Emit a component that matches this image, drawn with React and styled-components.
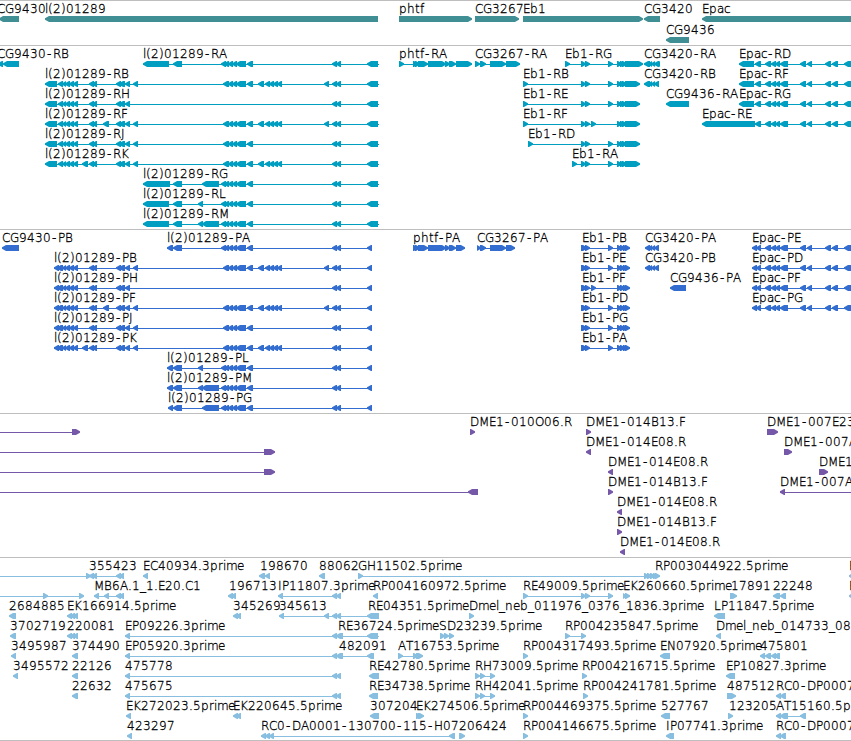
import React from 'react';
import styled, { createGlobalStyle } from 'styled-components';

const GlobalStyle = createGlobalStyle`
  body {
    margin: 0;
    background: #fff;
    overflow: hidden;
  }
`;

// advance widths of the label face at 12px, whole pixels like the old bitmap fonts
const ADVANCE = {
  '(': 5, ')': 5, '-': 7, '.': 4, _: 6,
  A: 8, B: 8, C: 8, D: 9, E: 7, F: 7, G: 9, H: 9, I: 4, J: 5, K: 8, L: 7, M: 10,
  N: 9, O: 9, P: 7, R: 8, S: 8, T: 7,
  a: 7, b: 8, c: 6, e: 7, f: 4, h: 8, i: 3, l: 3, m: 11, n: 8, p: 8, r: 5, t: 5,
};

function glyphPositions(text, start) {
  let pen = start;
  return text.split('').map((ch) => {
    const at = ch === '-' ? pen + 1 : pen;
    pen += ADVANCE[ch] || 8;
    return at;
  }).join(' ');
}

// blunt arrow head, widening to the full six pixels of the body
function arrow([from, to], dir) {
  const tip = dir === 'L' ? from : to;
  const end = dir === 'L' ? to : from;
  const neck = dir === 'L' ? tip + 4 : tip - 4;
  return `M${tip} 17.2 L${neck} 15 H${end} V21 H${neck} L${tip} 18.8 Z`;
}

/* f(label, label x, direction, exons, [line start, line end]) */
const f = (label, x, dir, exons = [], line) => ({ label, x, dir, exons, line });

// exon groups shared by the transcripts
const farEnd = [[332, 337], [336, 341]];
const extra = [[324, 329]];
const wideCluster = [[221, 226], [224, 229], [228, 233], [232, 237], [236, 246], [247, 253]];
const cluster = [[223, 229], [228, 233], [232, 237], [236, 246], [247, 253]];
const tail = [[258, 264], [265, 270], [269, 274], [273, 278], [277, 282]];
const five = [[58, 63], [62, 66], [65, 70], [69, 74], [73, 78]];
const pair = [[89, 94], [92, 97]];
const triple = [[116, 121], [119, 125], [125, 130]];
const after = [[133, 138]];

const eb1Mid = [[581, 586], [585, 590], [608, 613]];
const eb1MidF = [[581, 586], [585, 590], [591, 596]];
const eb1End = [[617, 622], [620, 625], [622, 627], [625, 640]];
const eb1Prot = [[617, 622], [620, 625], [623, 628], [625, 630]];
const cg3420 = [[648, 652], [651, 655], [654, 659]];
const epac = [[765, 771], [771, 776], [775, 780], [780, 788], [800, 806], [807, 812], [825, 831], [832, 838], [844, 856]];

const genes = [
  [
    f('CG9430', -3, 'L', [[-1, 19]]),
    f('l(2)01289', 45, 'L', [[45, 378]]),
    f('phtf', 399, 'R', [[399, 472]]),
    f('CG3267', 475, 'R', [[475, 519]]),
    f('Eb1', 523, 'R', [[523, 643]]),
    f('CG3420', 644, 'L', [[644, 660]]),
    f('Epac', 702, 'L', [[702, 860]]),
  ],
  [f('CG9436', 666, 'L', [[666, 689]])],
];

const lrna = (name, x, exons) => f(`l(2)01289-${name}`, x, 'L', [...exons, ...farEnd, [367, 378]], [x, 379]);
const lprot = (name, x, exons) => f(`l(2)01289-${name}`, x, 'L', [...exons, ...farEnd, [367, 372]], [x, 372]);
const eb1 = (name, x, mid, end) => f(`Eb1-${name}`, x, 'R', [[x, x + 5], ...mid, ...end], [x, end[3][1]]);
const epacRow = (name, x, exons) => f(`Epac-${name}`, x, 'L', [...exons, ...epac], [x, 851]);

const rnaStart = [[45, 57], ...five];
const protStart = [[54, 59], [57, 62], ...five];

const transcripts = [
  [
    f('CG9430-RB', -3, 'L', [[-2, 3], [3, 19]]),
    lrna('RA', 143, [[143, 169], [173, 182], ...wideCluster]),
    f('phtf-RA', 399, 'R', [[399, 404], [413, 418], [415, 420], [418, 428], [428, 446], [445, 450], [449, 456], [456, 472]], [399, 472]),
    f('CG3267-RA', 475, 'R', [[475, 480], [480, 486], [490, 506], [506, 520]], [475, 520]),
    eb1('RG', 565, eb1Mid, [[617, 622], [620, 625], [622, 627], [625, 643]]),
    f('CG3420-RA', 644, 'L', [[644, 650], ...cg3420, [656, 660]]),
    epacRow('RD', 739, [[739, 754], [755, 761]]),
  ],
  [
    lrna('RB', 45, [...rnaStart, ...pair, ...triple, ...after, ...cluster, ...tail, ...extra]),
    eb1('RB', 523, eb1Mid, eb1End),
    f('CG3420-RB', 644, 'L', [[644, 650], ...cg3420]),
    epacRow('RF', 739, [[739, 754], [755, 761]]),
  ],
  [
    lrna('RH', 45, [...rnaStart, ...pair, ...triple]),
    eb1('RE', 523, eb1Mid, eb1End),
    f('CG9436-RA', 666, 'L', [[666, 689]]),
    epacRow('RG', 739, [[739, 754], [755, 761]]),
  ],
  [
    lrna('RF', 45, [...rnaStart, ...pair, [103, 109], ...triple, ...after, ...cluster, ...tail, ...extra]),
    eb1('RF', 523, eb1MidF, eb1End),
    epacRow('RE', 702, [[702, 755], [755, 761]]),
  ],
  [
    lrna('RJ', 45, [...rnaStart, ...pair, ...triple, ...after, ...cluster]),
    eb1('RD', 528, eb1Mid, eb1End),
  ],
  [
    lrna('RK', 45, [...rnaStart, [82, 88], ...pair, ...triple, ...after, ...cluster, ...tail]),
    eb1('RA', 572, eb1Mid, eb1End),
  ],
  [lrna('RG', 143, [[143, 170], [173, 182], [202, 219], ...wideCluster])],
  [lrna('RL', 143, [[143, 169], [173, 182], [198, 203], ...wideCluster])],
  [lrna('RM', 143, [[143, 169], [173, 182], [198, 203], [202, 219], ...wideCluster])],
];

const proteins = [
  [
    f('CG9430-PB', 2, 'L', [[2, 19]]),
    lprot('PA', 167, [[167, 173], [173, 182], ...wideCluster]),
    f('phtf-PA', 413, 'R', [[413, 418], [415, 420], [418, 428], [428, 446], [445, 450], [449, 456], [456, 465]], [413, 465]),
    f('CG3267-PA', 477, 'R', [[477, 481], [480, 486], [490, 506], [506, 515]], [477, 515]),
    eb1('PB', 582, eb1Mid, eb1Prot),
    f('CG3420-PA', 645, 'L', [[645, 650], ...cg3420]),
    epacRow('PE', 752, [[752, 757], [756, 761]]),
  ],
  [
    lprot('PB', 54, [...protStart, ...pair, ...triple, ...after, ...cluster, ...tail, ...extra]),
    eb1('PE', 582, eb1Mid, eb1Prot),
    f('CG3420-PB', 645, 'L', [[645, 650], ...cg3420]),
    epacRow('PD', 752, [[752, 757], [756, 761]]),
  ],
  [
    lprot('PH', 54, [...protStart, ...pair, ...triple]),
    eb1('PF', 582, eb1MidF, eb1Prot),
    f('CG9436-PA', 670, 'L', [[670, 686]]),
    epacRow('PF', 752, [[752, 757], [756, 761]]),
  ],
  [
    lprot('PF', 54, [...protStart, ...pair, [103, 109], ...triple, ...after, ...cluster, ...tail, ...extra]),
    eb1('PD', 582, eb1Mid, eb1Prot),
    epacRow('PG', 752, [[752, 757], [756, 761]]),
  ],
  [
    lprot('PJ', 54, [...protStart, ...pair, ...triple, ...after, ...cluster]),
    eb1('PG', 582, eb1Mid, eb1Prot),
  ],
  [
    lprot('PK', 54, [...protStart, [82, 88], ...pair, ...triple, ...after, ...cluster, ...tail]),
    eb1('PA', 582, eb1Mid, eb1Prot),
  ],
  [lprot('PL', 167, [[167, 173], [173, 182], [198, 203], ...wideCluster])],
  [lprot('PM', 167, [[167, 173], [173, 182], [198, 203], [202, 219], ...wideCluster])],
  [lprot('PG', 168, [[168, 173], [173, 182], [202, 219], ...wideCluster])],
];

const clones = [
  [
    f('', 0, 'R', [[72, 80]], [0, 75]),
    f('DME1-010O06.R', 470, 'R', [[470, 475]]),
    f('DME1-014B13.F', 586, 'R', [[586, 591]]),
    f('DME1-007E23', 767, 'R', [[767, 778]]),
  ],
  [
    f('', 0, 'R', [[264, 275]], [0, 270]),
    f('DME1-014E08.R', 586, 'L', [[586, 591]]),
    f('DME1-007A', 784, 'R', [[784, 792]]),
  ],
  [
    f('', 0, 'R', [[264, 275]], [0, 270]),
    f('DME1-014E08.R', 608, 'L', [[608, 613]]),
    f('DME1', 819, 'R', [[819, 828]]),
  ],
  [
    f('', 0, 'L', [[468, 478]], [0, 474]),
    f('DME1-014B13.F', 608, 'R', [[608, 613]]),
    f('DME1-007A', 780, 'L', [[780, 785]], [780, 851]),
  ],
  [f('DME1-014E08.R', 617, 'L', [[617, 622]])],
  [f('DME1-014B13.F', 617, 'R', [[617, 622]])],
  [f('DME1-014E08.R', 620, 'L', [[620, 625]])],
];

const insertions = [
  [
    f('', 0, 'R', [[86, 91]], [0, 91]),
    f('355423', 89, 'L', [[89, 94], [92, 97], [116, 121], [119, 124]], [89, 124]),
    f('EC40934.3prime', 143, 'L', [[143, 148]]),
    f('198670', 260, 'L', [[259, 265], [265, 270]]),
    f('88062', 319, 'L', [[319, 325]]),
    f('GH11502.5prime', 358, 'R', [[358, 363], [644, 649], [647, 652], [650, 655], [653, 658], [655, 660]], [358, 660]),
    f('RP003044922.5prime', 655, 'L'),
    f('R', 849, 'L', [[849, 854]]),
  ],
  [
    f('', 0, 'R', [[43, 48], [79, 84]], [0, 84]),
    f('MB6A.1_1.E20.C1', 94, 'L', [[94, 99], [104, 109], [116, 121], [119, 124]], [94, 124]),
    f('196713', 229, 'L', [[228, 233], [231, 236]]),
    f('IP11807.3prime', 278, 'L', [[278, 283], ...farEnd], [278, 341]),
    f('RP004160972.5prime', 373, 'L', [[373, 378]]),
    f('RE49009.5prime', 523, 'R', [[523, 528], ...eb1Mid], [523, 613]),
    f('EK260660.5prime', 623, 'R', [[623, 627], [625, 630]]),
    f('17891', 731, 'R', [[730, 737]]),
    f('22248', 773, 'L', [[773, 780], [780, 786]]),
    f('R', 849, 'L', [[849, 854]]),
  ],
  [
    f('2684885', 9, 'L', [[9, 16]]),
    f('EK166914.5prime', 67, 'L', [[67, 72], [70, 75], [73, 78]]),
    f('345269', 233, 'L', [[233, 238], [236, 241]]),
    f('345613', 279, 'L', [[279, 284], ...extra, ...farEnd, [367, 379]], [279, 379]),
    f('RE04351.5prime', 368, 'L'),
    f('Dmel_neb_011976_0376_1836.3prime', 469, 'R', [[469, 474]]),
    f('LP11847.5prime', 714, 'L', [[714, 725]]),
  ],
  [
    f('3702719', 10, 'L', [[10, 16]]),
    f('220081', 67, 'L', [[67, 72], [70, 75], [73, 78]]),
    f('EP09226.3prime', 125, 'L', [[125, 130], [332, 337], [336, 343], [367, 378]], [125, 379]),
    f('RE36724.5prime', 338, 'L'),
    f('SD23239.5prime', 439, 'R', [[440, 445], [444, 449], [449, 454]]),
    f('RP004235847.5prime', 565, 'R', [[565, 570], [581, 586]], [565, 586]),
    f('Dmel_neb_014733_08', 716, 'L', [[716, 721]]),
  ],
  [
    f('3495987', 11, 'L', [[11, 16]]),
    f('374490', 72, 'L', [[72, 78]]),
    f('EP05920.3prime', 125, 'L', [[125, 130], [332, 337], [336, 343], [367, 374]], [125, 374]),
    f('482091', 339, 'L'),
    f('AT16753.5prime', 398, 'R', [[398, 403], [413, 418], [416, 423]], [398, 420]),
    f('RP004317493.5prime', 523, 'R', [[523, 528]]),
    f('EN07920.5prime', 660, 'L', [[660, 670]]),
    f('475801', 760, 'L', [[760, 765], [765, 771], [771, 776], [774, 780]]),
  ],
  [
    f('3495572', 13, 'L', [[13, 18]]),
    f('22126', 72, 'L', [[72, 78]]),
    f('475778', 125, 'L', [[125, 130], ...farEnd], [125, 341]),
    f('RE42780.5prime', 369, 'L', [[369, 379]]),
    f('RH73009.5prime', 475, 'R', [[475, 480], [480, 485], [490, 495]], [475, 495]),
    f('RP004216715.5prime', 582, 'R', [[582, 587]]),
    f('EP10827.3prime', 726, 'L', [[726, 735]]),
  ],
  [
    f('22632', 72, 'L', [[72, 78]]),
    f('475675', 125, 'L', [[125, 130], ...farEnd], [125, 341]),
    f('RE34738.5prime', 369, 'L', [[369, 378]]),
    f('RH42041.5prime', 475, 'R', [[475, 480], [480, 485], [490, 495]], [475, 495]),
    f('RP004241781.5prime', 583, 'R', [[583, 588]]),
    f('487512', 727, 'R', [[727, 736]]),
    f('RC0-DP0007', 776, 'L', [[776, 781], [780, 786]]),
  ],
  [
    f('EK272023.5prime', 126, 'L', [[126, 131]]),
    f('EK220645.5prime', 233, 'L', [[233, 238], [236, 241]]),
    f('307204', 370, 'L', [[370, 379]]),
    f('EK274506.5prime', 416, 'R', [[416, 421], [418, 424]]),
    f('RP004469375.5prime', 523, 'R', [[523, 528]]),
    f('527767', 661, 'L', [[661, 670]]),
    f('123205', 729, 'R', [[728, 733]]),
    f('AT15160.5p', 776, 'L', [[776, 781], [780, 788], [800, 806]], [776, 806]),
  ],
  [
    f('423297', 127, 'L', [[127, 132]]),
    f('RC0-DA0001-130700-115-H07', 261, 'L', [[261, 266], [265, 270], [269, 274], [449, 455]], [261, 455]),
    f('206424', 459, 'R', [[459, 465]]),
    f('RP004146675.5prime', 523, 'R', [[523, 528]]),
    f('IP07741.3prime', 666, 'L', [[666, 674]]),
    f('RC0-DP0007', 776, 'L', [[776, 781], [780, 786]]),
  ],
];

const tracks = [
  { id: 'genes', color: '#408f94', height: 45, lane: 21, rows: genes },
  { id: 'transcripts', color: '#009fc1', height: 184, lane: 20, rows: transcripts },
  { id: 'proteins', color: '#326dcf', height: 184, lane: 20, rows: proteins },
  { id: 'clones', color: '#7658a8', height: 144, lane: 20, rows: clones },
  { id: 'insertions', color: '#88bedf', height: 183, lane: 20, rows: insertions },
];

function App() {
  return (
    <>
      <GlobalStyle />
      <Browser>
        {tracks.map((track) => (
          <Track key={track.id} $height={track.height}>
            {track.rows.map((row, i) => (
              <Lane key={i} $height={track.lane} $color={track.color}>
                {row.map((item, j) => (
                  <g key={j}>
                    {item.line && (
                      <rect x={item.line[0]} y="18" width={item.line[1] - item.line[0]} height="1" />
                    )}
                    {item.exons.map((exon, k) => <path key={k} d={arrow(exon, item.dir)} />)}
                    {item.label && (
                      <Label x={glyphPositions(item.label, item.x)} y="12">{item.label}</Label>
                    )}
                  </g>
                ))}
              </Lane>
            ))}
          </Track>
        ))}
      </Browser>
    </>
  );
}

export default App

const Browser = styled.main`
  display: flex;
  flex-direction: column;
  box-sizing: border-box;
  width: 851px;
  height: 741px;
  overflow: hidden;
  background: #fff;
  border-bottom: 1px solid #bebebe;
`;

const Track = styled.section`
  display: flex;
  flex-direction: column;
  flex: none;
  box-sizing: border-box;
  height: ${({ $height }) => $height}px;
  border-top: 1px solid #bebebe;
`;

const Lane = styled.svg`
  display: block;
  flex: none;
  width: 851px;
  height: ${({ $height }) => $height}px;
  overflow: visible;
  fill: ${({ $color }) => $color};
`;

const Label = styled.text`
  font-family: "DejaVu Sans", sans-serif;
  font-size: 12px;
  font-weight: 200;
  fill: #000;
  stroke: #000;
  stroke-width: 0.3px;
`;
